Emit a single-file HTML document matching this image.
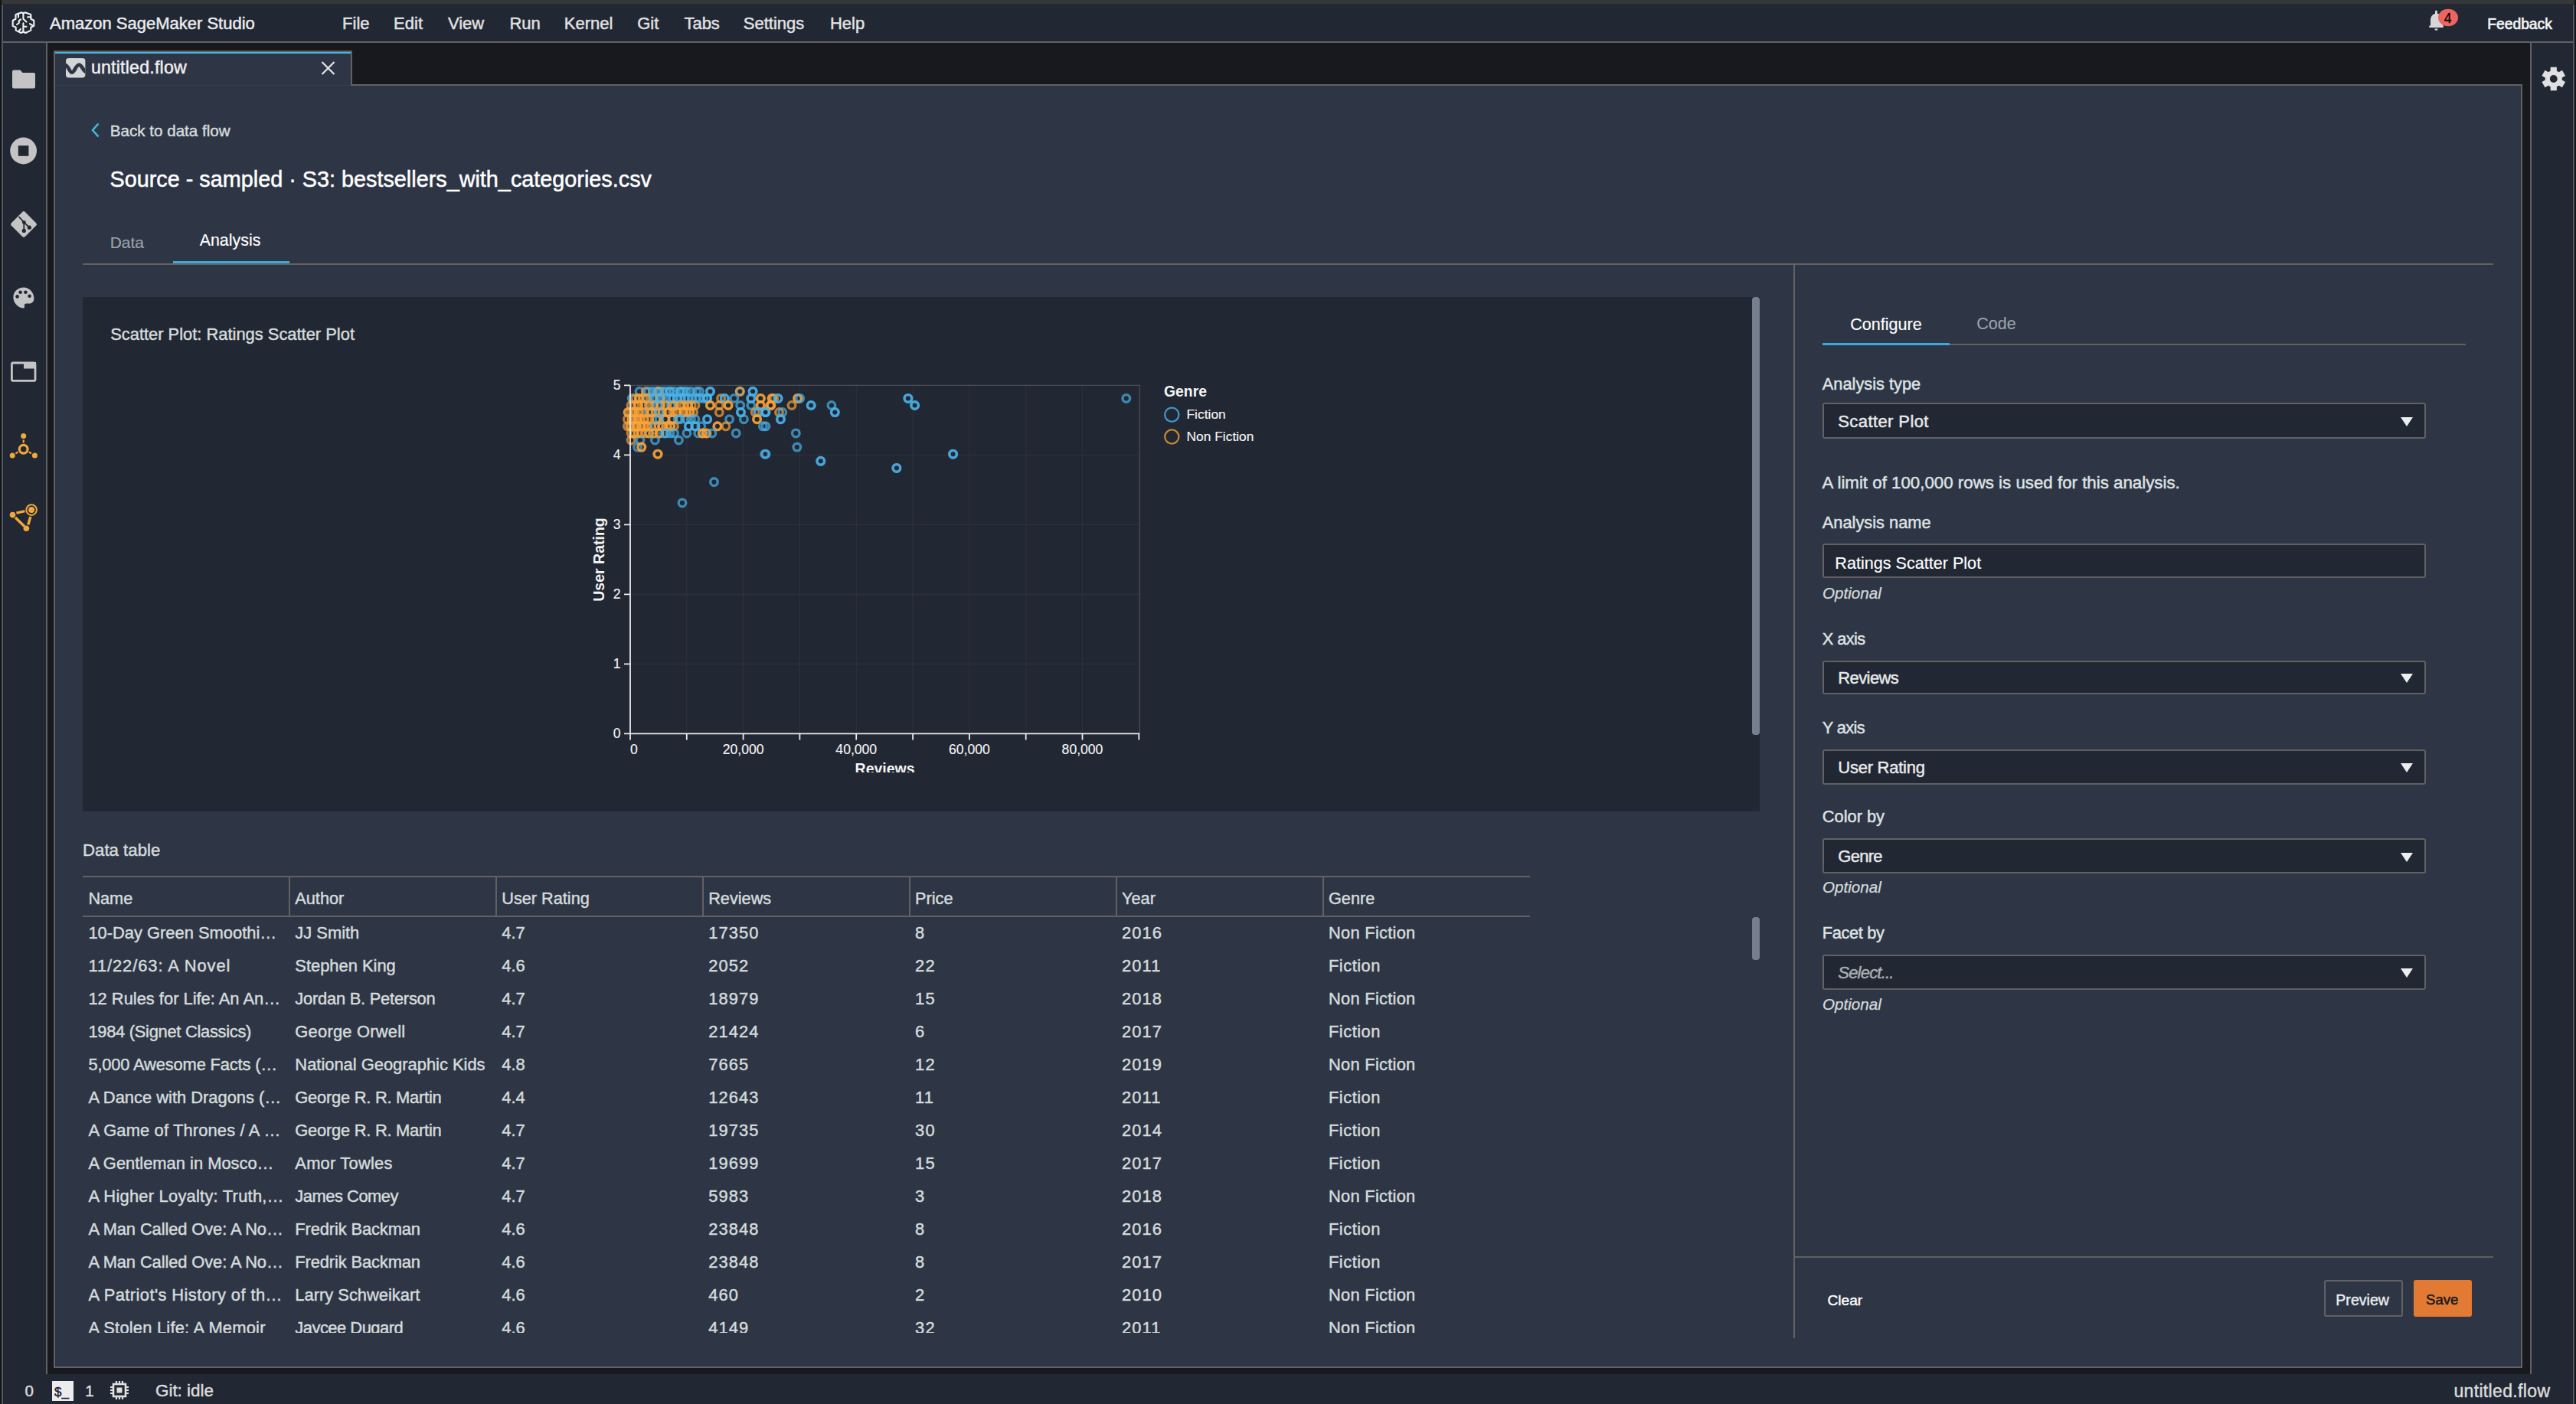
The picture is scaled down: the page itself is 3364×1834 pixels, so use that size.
<!DOCTYPE html><html><head><meta charset="utf-8"><style>
html,body{margin:0;padding:0;}
body{width:3364px;height:1834px;position:relative;overflow:hidden;background:#17191e;font-family:"Liberation Sans", sans-serif;}
div{box-sizing:border-box;}
svg{position:absolute;overflow:visible;}
</style></head><body>
<div style="position:absolute;left:0px;top:0px;width:3364px;height:5px;background:#36373b;"></div>
<div style="position:absolute;left:0px;top:5px;width:3364px;height:1px;background:#2a2a2a;"></div>
<div style="position:absolute;left:0px;top:6px;width:3364px;height:1828px;background:#212834;"></div>
<div style="position:absolute;left:0px;top:0px;width:2px;height:1834px;background:#141414;"></div>
<div style="position:absolute;left:2px;top:6px;width:2px;height:1828px;background:#4f5866;"></div>
<div style="position:absolute;left:3360px;top:6px;width:2px;height:1828px;background:#4f5866;"></div>
<div style="position:absolute;left:3362px;top:0px;width:2px;height:1834px;background:#141414;"></div>
<div style="position:absolute;left:4px;top:54px;width:3356px;height:2px;background:#616161;"></div>
<div style="position:absolute;left:62px;top:56px;width:3242px;height:1739px;background:#17191e;"></div>
<div style="position:absolute;left:60px;top:56px;width:2px;height:1739px;background:#616161;"></div>
<div style="position:absolute;left:3304px;top:56px;width:2px;height:1739px;background:#616161;"></div>
<div style="position:absolute;left:70px;top:110px;width:3224px;height:1676.5px;background:#2e3646;border:2px solid #616161;"></div>
<div style="position:absolute;left:70px;top:65.5px;width:390px;height:46.5px;background:#2e3646;border:2px solid #616161;border-bottom:none;"></div>
<div style="position:absolute;left:72px;top:67.6px;width:386px;height:2.6000000000000085px;background:#48b2e6;"></div>
<div style="position:absolute;left:72px;top:111px;width:386px;height:1px;background:#383e4b;"></div>
<svg style="left:10px;top:10px" width="40" height="40" viewBox="0 0 40 40">
<g fill="none" stroke="#f2f2f2" stroke-width="2.1" stroke-linejoin="round" stroke-linecap="round">
<path d="M20.4 7 L17.5 6.4 L10.5 9.1 L10.5 14.8 L6.7 16.8 L6.7 23.9 L10.7 25.8 L10.7 29.6 L17.5 33 L20.4 31.5 L23.4 33 L30.3 29.6 L30.3 25.8 L34.3 23.9 L34.3 16.8 L30.3 14.8 L30.3 9.1 L23.4 6.4 Z"/>
<path d="M20.4 7 L20.4 14.8 L24.5 18.5"/>
<path d="M20.4 20.4 L20.4 31.5 M20.4 24.8 L24.5 24.8"/>
<path d="M14 9.4 L14 12.5"/>
<path d="M17.1 15.4 L14.8 17.1 L14.8 20 L12 22"/>
<path d="M17.1 28 L15 30"/>
<path d="M26.2 12.3 L30.3 12.3"/>
<path d="M29 21.1 L32.2 23"/>
</g></svg>
<div style="position:absolute;left:65.00px;top:19.78px;font-size:22px;line-height:22px;color:#ececec;font-weight:normal;font-style:normal;white-space:nowrap;-webkit-text-stroke:0.45px #ececec;">Amazon SageMaker Studio</div>
<div style="position:absolute;left:447.10px;top:19.78px;font-size:22px;line-height:22px;color:#e2e2e2;font-weight:normal;font-style:normal;white-space:nowrap;-webkit-text-stroke:0.45px #e2e2e2;">File</div>
<div style="position:absolute;left:514.10px;top:19.78px;font-size:22px;line-height:22px;color:#e2e2e2;font-weight:normal;font-style:normal;white-space:nowrap;-webkit-text-stroke:0.45px #e2e2e2;">Edit</div>
<div style="position:absolute;left:584.90px;top:19.78px;font-size:22px;line-height:22px;color:#e2e2e2;font-weight:normal;font-style:normal;white-space:nowrap;-webkit-text-stroke:0.45px #e2e2e2;">View</div>
<div style="position:absolute;left:665.40px;top:19.78px;font-size:22px;line-height:22px;color:#e2e2e2;font-weight:normal;font-style:normal;white-space:nowrap;-webkit-text-stroke:0.45px #e2e2e2;">Run</div>
<div style="position:absolute;left:736.80px;top:19.78px;font-size:22px;line-height:22px;color:#e2e2e2;font-weight:normal;font-style:normal;white-space:nowrap;-webkit-text-stroke:0.45px #e2e2e2;">Kernel</div>
<div style="position:absolute;left:832.20px;top:19.78px;font-size:22px;line-height:22px;color:#e2e2e2;font-weight:normal;font-style:normal;white-space:nowrap;-webkit-text-stroke:0.45px #e2e2e2;">Git</div>
<div style="position:absolute;left:893.40px;top:19.78px;font-size:22px;line-height:22px;color:#e2e2e2;font-weight:normal;font-style:normal;white-space:nowrap;-webkit-text-stroke:0.45px #e2e2e2;">Tabs</div>
<div style="position:absolute;left:970.80px;top:19.78px;font-size:22px;line-height:22px;color:#e2e2e2;font-weight:normal;font-style:normal;white-space:nowrap;-webkit-text-stroke:0.45px #e2e2e2;">Settings</div>
<div style="position:absolute;left:1083.90px;top:19.78px;font-size:22px;line-height:22px;color:#e2e2e2;font-weight:normal;font-style:normal;white-space:nowrap;-webkit-text-stroke:0.45px #e2e2e2;">Help</div>
<svg style="left:3165px;top:8px" width="50" height="40" viewBox="0 0 50 40">
<path d="M16.5 5.5 a1.5 1.5 0 0 1 1.5 1.5 L18 9.8 C22 10.6 25.2 14 25.2 18.5 L25.2 25.5 L25.8 25.5 L25.8 28 L7.3 28 L7.3 25.5 L9 25.5 L9 18.5 C9 14 11.6 10.6 15 9.8 L15 7 a1.5 1.5 0 0 1 1.5-1.5 Z" fill="#d6d6d8"/>
<path d="M14.2 29.5 L18.8 29.5 Q18.6 31.7 16.5 31.7 Q14.4 31.7 14.2 29.5 Z" fill="#d6d6d8"/>
<ellipse cx="32" cy="15" rx="13" ry="11.3" fill="#ee6560"/>
</svg>
<div style="position:absolute;left:3196.70px;transform:translateX(-50%);top:16.39px;font-size:17.5px;line-height:17.5px;color:#000;font-weight:normal;font-style:normal;white-space:nowrap;-webkit-text-stroke:0.3px #000;">4</div>
<div style="position:absolute;left:3248.20px;top:21.76px;font-size:19.3px;line-height:19.3px;color:#f4f4f4;font-weight:normal;font-style:normal;white-space:nowrap;-webkit-text-stroke:0.65px #f4f4f4;">Feedback</div>
<svg style="left:0px;top:60px" width="62" height="660" viewBox="0 0 62 660">
<g fill="#c4c4c4">
<path d="M16 33.6 a2 2 0 0 1 2-2 L26.5 31.6 L29.5 35 L44 35 a2 2 0 0 1 2 2 L46 53.6 a2 2 0 0 1-2 2 L18 55.6 a2 2 0 0 1-2-2 Z"/>
<circle cx="30.6" cy="137" r="17.4"/>
</g>
<rect x="23.8" y="130.2" width="13.6" height="13.6" fill="#212834"/>
<g transform="translate(31 233)">
<rect x="-12.7" y="-12.7" width="25.4" height="25.4" rx="3" transform="rotate(45)" fill="#c4c4c4"/>
<path d="M-6.5 -10 L0.3 -2.6 L0.3 8.4 M0.3 -2.6 L7.3 4.2" stroke="#212834" stroke-width="1.8" fill="none"/>
<circle cx="0.3" cy="-2.6" r="2.4" fill="#212834"/><circle cx="0.3" cy="8.4" r="2.6" fill="#212834"/><circle cx="7.3" cy="4.2" r="2.6" fill="#212834"/>
</g>
<g transform="translate(0 -60)">
<path d="M31 375.6 C23 375.6 17.4 381.2 17.4 388.5 C17.4 395.5 23 401.5 30 402.6 C31.6 402.8 32.4 401.6 32 400.3 C31.4 398.6 32 396.8 34 396.6 L38 396.6 C41.6 396.6 44.4 394 44.4 390 C44.4 382.2 38.4 375.6 31 375.6 Z" fill="#c4c4c4"/>
<circle cx="22.6" cy="387.4" r="2.3" fill="#212834"/><circle cx="26.6" cy="381.8" r="2.3" fill="#212834"/><circle cx="33.4" cy="381.8" r="2.3" fill="#212834"/><circle cx="38.6" cy="386.8" r="2.3" fill="#212834"/>
<rect x="15.4" y="474" width="30.6" height="23.4" rx="2" fill="none" stroke="#c4c4c4" stroke-width="2.8"/>
<rect x="31" y="473" width="16" height="8.5" fill="#c4c4c4"/>
</g>
<g transform="translate(0 -60)" fill="#f2a83a" stroke="#f2a83a">
<circle cx="30.7" cy="586.7" r="5.4" fill="none" stroke-width="3.2"/>
<circle cx="30.7" cy="569.5" r="3.5" stroke="none"/>
<circle cx="16.2" cy="594.9" r="3.5" stroke="none"/>
<circle cx="45.4" cy="594.9" r="3.5" stroke="none"/>
<path d="M30.7 574.6 V578.6 M20.4 592.4 L23.6 590.3 M37.8 590.3 L41 592.4" stroke-width="2.2" fill="none"/>
<circle cx="16.5" cy="672.6" r="3.8" stroke="none"/>
<circle cx="34.4" cy="690.3" r="3.8" stroke="none"/>
<circle cx="41.1" cy="666.1" r="6.8" fill="none" stroke-width="2"/>
<circle cx="41.1" cy="666.1" r="4" stroke="none"/>
<path d="M21.4 670.1 L32.4 667.6 M20 676 L31.9 687.5 M39.9 675.1 L36.7 685.4" stroke-width="3.4" fill="none"/>
</g>
</svg>
<svg style="left:85.8px;top:75.8px" width="25.4" height="25.4" viewBox="0 0 25.4 25.4">
<defs><clipPath id="tc"><rect x="0" y="0" width="25.4" height="25.4" rx="3.6"/></clipPath></defs>
<rect x="0" y="0" width="25.4" height="25.4" rx="3.6" fill="#d4d5d7"/>
<path clip-path="url(#tc)" d="M-1 8.6 C3 9.6 5 18.6 8 18.6 C11 18.6 13.5 8.6 17.2 8.6 C21 8.6 22.6 17 26.4 17.8" fill="none" stroke="#2e3646" stroke-width="4.8"/>
</svg>
<div style="position:absolute;left:118.90px;top:77.16px;font-size:23.2px;line-height:23.2px;color:#f0f0f0;font-weight:normal;font-style:normal;white-space:nowrap;letter-spacing:0.2px;-webkit-text-stroke:0.45px #f0f0f0;">untitled.flow</div>
<svg style="left:419px;top:80px" width="19" height="18" viewBox="0 0 19 18">
<path d="M1.5 1 L17.5 17 M17.5 1 L1.5 17" stroke="#e6e6e6" stroke-width="2.2"/>
</svg>
<svg style="left:3310px;top:78px" width="50" height="50" viewBox="-24.75 -25 50 50"><g fill="#e0e0e0"><circle r="11"/><rect x="-4.1" y="-15.3" width="8.2" height="10" transform="rotate(0)"/><rect x="-4.1" y="-15.3" width="8.2" height="10" transform="rotate(60)"/><rect x="-4.1" y="-15.3" width="8.2" height="10" transform="rotate(120)"/><rect x="-4.1" y="-15.3" width="8.2" height="10" transform="rotate(180)"/><rect x="-4.1" y="-15.3" width="8.2" height="10" transform="rotate(240)"/><rect x="-4.1" y="-15.3" width="8.2" height="10" transform="rotate(300)"/></g><circle r="4.9" fill="#212834"/></svg>
<svg style="left:117px;top:159px" width="16" height="22" viewBox="0 0 16 22">
<path d="M11.5 2.5 L4 11 L11.5 19.5" fill="none" stroke="#44b9d6" stroke-width="2.6"/>
</svg>
<div style="position:absolute;left:143.80px;top:160.76px;font-size:20.6px;line-height:20.6px;color:#d5dbdb;font-weight:normal;font-style:normal;white-space:nowrap;-webkit-text-stroke:0.45px #d5dbdb;">Back to data flow</div>
<div style="position:absolute;left:143.50px;top:219.62px;font-size:28.8px;line-height:28.8px;color:#ffffff;font-weight:normal;font-style:normal;white-space:nowrap;-webkit-text-stroke:0.5px #fff;">Source - sampled · S3: bestsellers_with_categories.csv</div>
<div style="position:absolute;left:143.70px;top:306.12px;font-size:21px;line-height:21px;color:#9ba3ab;font-weight:normal;font-style:normal;white-space:nowrap;-webkit-text-stroke:0.15px #9ba3ab;">Data</div>
<div style="position:absolute;left:260.70px;top:303.58px;font-size:21.4px;line-height:21.4px;color:#ffffff;font-weight:normal;font-style:normal;white-space:nowrap;-webkit-text-stroke:0.15px #ffffff;">Analysis</div>
<div style="position:absolute;left:108px;top:344px;width:3148px;height:1.6000000000000227px;background:#616161;"></div>
<div style="position:absolute;left:225.8px;top:341px;width:152.2px;height:3px;background:#3fa7dc;"></div>
<div style="position:absolute;left:108px;top:388px;width:2190px;height:671.5px;background:#212733;"></div>
<div style="position:absolute;left:2288px;top:388px;width:10px;height:572px;background:#767f8e;border-radius:4px;"></div>
<div style="position:absolute;left:144.20px;top:426.46px;font-size:21.9px;line-height:21.9px;color:#d5dbdb;font-weight:normal;font-style:normal;white-space:nowrap;-webkit-text-stroke:0.45px #d5dbdb;">Scatter Plot: Ratings Scatter Plot</div>
<div style="position:absolute;left:108px;top:388px;width:2180px;height:621.4px;overflow:hidden;"><svg style="left:-108px;top:-388px" width="3364" height="1834"><path d="M896.8 503.3 V958.3 M970.6 503.3 V958.3 M1044.4 503.3 V958.3 M1118.2 503.3 V958.3 M1192.1 503.3 V958.3 M1265.9 503.3 V958.3 M1339.7 503.3 V958.3 M1413.5 503.3 V958.3 M823 867.3 H1488.3 M823 776.3 H1488.3 M823 685.3 H1488.3 M823 594.3 H1488.3" stroke="#2c313b" stroke-width="1.2" fill="none"/><path d="M823 503.4 H1488.3 V958.3" stroke="#4a4e57" stroke-width="1.3" fill="none"/><g fill="none" stroke-width="3.4" stroke-opacity="0.7"><circle cx="835.1" cy="511.3" r="4.8" stroke="#4cb2e8"/><circle cx="843.3" cy="511.3" r="4.8" stroke="#f9a338"/><circle cx="846.8" cy="511.3" r="4.8" stroke="#4cb2e8"/><circle cx="858.6" cy="511.3" r="4.8" stroke="#4cb2e8"/><circle cx="858.6" cy="511.3" r="4.8" stroke="#4cb2e8"/><circle cx="860.9" cy="511.3" r="4.8" stroke="#f9a338"/><circle cx="875.0" cy="511.3" r="4.8" stroke="#4cb2e8"/><circle cx="875.0" cy="511.3" r="4.8" stroke="#4cb2e8"/><circle cx="888.3" cy="511.3" r="4.8" stroke="#4cb2e8"/><circle cx="888.3" cy="511.3" r="4.8" stroke="#4cb2e8"/><circle cx="896.2" cy="511.3" r="4.8" stroke="#4cb2e8"/><circle cx="909.5" cy="511.3" r="4.8" stroke="#4cb2e8"/><circle cx="913.4" cy="511.3" r="4.8" stroke="#4cb2e8"/><circle cx="927.5" cy="511.3" r="4.8" stroke="#4cb2e8"/><circle cx="927.5" cy="511.3" r="4.8" stroke="#4cb2e8"/><circle cx="966.3" cy="511.3" r="4.8" stroke="#4cb2e8"/><circle cx="966.3" cy="511.3" r="4.8" stroke="#f9a338"/><circle cx="983.1" cy="511.3" r="4.8" stroke="#4cb2e8"/><circle cx="983.1" cy="511.3" r="4.8" stroke="#4cb2e8"/><circle cx="825.3" cy="520.4" r="4.8" stroke="#4cb2e8"/><circle cx="834.3" cy="520.4" r="4.8" stroke="#f9a338"/><circle cx="834.3" cy="520.4" r="4.8" stroke="#f9a338"/><circle cx="844.5" cy="520.4" r="4.8" stroke="#4cb2e8"/><circle cx="844.5" cy="520.4" r="4.8" stroke="#f9a338"/><circle cx="852.3" cy="520.4" r="4.8" stroke="#f9a338"/><circle cx="861.7" cy="520.4" r="4.8" stroke="#4cb2e8"/><circle cx="861.7" cy="520.4" r="4.8" stroke="#4cb2e8"/><circle cx="862.5" cy="520.4" r="4.8" stroke="#f9a338"/><circle cx="875.0" cy="520.4" r="4.8" stroke="#4cb2e8"/><circle cx="884.4" cy="520.4" r="4.8" stroke="#4cb2e8"/><circle cx="884.4" cy="520.4" r="4.8" stroke="#4cb2e8"/><circle cx="894.6" cy="520.4" r="4.8" stroke="#4cb2e8"/><circle cx="903.2" cy="520.4" r="4.8" stroke="#4cb2e8"/><circle cx="913.4" cy="520.4" r="4.8" stroke="#4cb2e8"/><circle cx="923.6" cy="520.4" r="4.8" stroke="#4cb2e8"/><circle cx="923.6" cy="520.4" r="4.8" stroke="#4cb2e8"/><circle cx="923.6" cy="520.4" r="4.8" stroke="#4cb2e8"/><circle cx="941.6" cy="520.4" r="4.8" stroke="#f9a338"/><circle cx="946.3" cy="520.4" r="4.8" stroke="#4cb2e8"/><circle cx="946.3" cy="520.4" r="4.8" stroke="#4cb2e8"/><circle cx="958.8" cy="520.4" r="4.8" stroke="#4cb2e8"/><circle cx="980.8" cy="520.4" r="4.8" stroke="#4cb2e8"/><circle cx="980.8" cy="520.4" r="4.8" stroke="#4cb2e8"/><circle cx="993.3" cy="520.4" r="4.8" stroke="#f9a338"/><circle cx="993.3" cy="520.4" r="4.8" stroke="#f9a338"/><circle cx="1008.2" cy="520.4" r="4.8" stroke="#f9a338"/><circle cx="1008.2" cy="520.4" r="4.8" stroke="#f9a338"/><circle cx="824.1" cy="529.5" r="4.8" stroke="#f9a338"/><circle cx="833.5" cy="529.5" r="4.8" stroke="#f9a338"/><circle cx="833.5" cy="529.5" r="4.8" stroke="#f9a338"/><circle cx="847.6" cy="529.5" r="4.8" stroke="#4cb2e8"/><circle cx="847.6" cy="529.5" r="4.8" stroke="#f9a338"/><circle cx="862.5" cy="529.5" r="4.8" stroke="#f9a338"/><circle cx="862.5" cy="529.5" r="4.8" stroke="#f9a338"/><circle cx="876.6" cy="529.5" r="4.8" stroke="#4cb2e8"/><circle cx="876.6" cy="529.5" r="4.8" stroke="#4cb2e8"/><circle cx="888.3" cy="529.5" r="4.8" stroke="#f9a338"/><circle cx="888.3" cy="529.5" r="4.8" stroke="#f9a338"/><circle cx="898.5" cy="529.5" r="4.8" stroke="#f9a338"/><circle cx="898.5" cy="529.5" r="4.8" stroke="#f9a338"/><circle cx="907.9" cy="529.5" r="4.8" stroke="#f9a338"/><circle cx="927.5" cy="529.5" r="4.8" stroke="#f9a338"/><circle cx="927.5" cy="529.5" r="4.8" stroke="#f9a338"/><circle cx="939.3" cy="529.5" r="4.8" stroke="#f9a338"/><circle cx="951.0" cy="529.5" r="4.8" stroke="#f9a338"/><circle cx="951.0" cy="529.5" r="4.8" stroke="#f9a338"/><circle cx="966.7" cy="529.5" r="4.8" stroke="#4cb2e8"/><circle cx="980.8" cy="529.5" r="4.8" stroke="#4cb2e8"/><circle cx="993.3" cy="529.5" r="4.8" stroke="#f9a338"/><circle cx="993.3" cy="529.5" r="4.8" stroke="#f9a338"/><circle cx="1005.8" cy="529.5" r="4.8" stroke="#f9a338"/><circle cx="820.2" cy="538.6" r="4.8" stroke="#f9a338"/><circle cx="820.2" cy="538.6" r="4.8" stroke="#f9a338"/><circle cx="828.0" cy="538.6" r="4.8" stroke="#f9a338"/><circle cx="828.0" cy="538.6" r="4.8" stroke="#f9a338"/><circle cx="834.3" cy="538.6" r="4.8" stroke="#f9a338"/><circle cx="834.3" cy="538.6" r="4.8" stroke="#f9a338"/><circle cx="846.8" cy="538.6" r="4.8" stroke="#4cb2e8"/><circle cx="850.7" cy="538.6" r="4.8" stroke="#f9a338"/><circle cx="850.7" cy="538.6" r="4.8" stroke="#f9a338"/><circle cx="860.9" cy="538.6" r="4.8" stroke="#4cb2e8"/><circle cx="860.9" cy="538.6" r="4.8" stroke="#4cb2e8"/><circle cx="872.7" cy="538.6" r="4.8" stroke="#f9a338"/><circle cx="872.7" cy="538.6" r="4.8" stroke="#f9a338"/><circle cx="884.4" cy="538.6" r="4.8" stroke="#f9a338"/><circle cx="884.4" cy="538.6" r="4.8" stroke="#f9a338"/><circle cx="892.3" cy="538.6" r="4.8" stroke="#f9a338"/><circle cx="892.3" cy="538.6" r="4.8" stroke="#f9a338"/><circle cx="900.9" cy="538.6" r="4.8" stroke="#f9a338"/><circle cx="900.9" cy="538.6" r="4.8" stroke="#f9a338"/><circle cx="905.6" cy="538.6" r="4.8" stroke="#f9a338"/><circle cx="939.3" cy="538.6" r="4.8" stroke="#f9a338"/><circle cx="967.5" cy="538.6" r="4.8" stroke="#4cb2e8"/><circle cx="967.5" cy="538.6" r="4.8" stroke="#4cb2e8"/><circle cx="986.3" cy="538.6" r="4.8" stroke="#f9a338"/><circle cx="990.2" cy="538.6" r="4.8" stroke="#4cb2e8"/><circle cx="990.2" cy="538.6" r="4.8" stroke="#4cb2e8"/><circle cx="999.6" cy="538.6" r="4.8" stroke="#4cb2e8"/><circle cx="999.6" cy="538.6" r="4.8" stroke="#4cb2e8"/><circle cx="824.9" cy="547.7" r="4.8" stroke="#f9a338"/><circle cx="824.9" cy="547.7" r="4.8" stroke="#f9a338"/><circle cx="832.7" cy="547.7" r="4.8" stroke="#f9a338"/><circle cx="832.7" cy="547.7" r="4.8" stroke="#f9a338"/><circle cx="841.3" cy="547.7" r="4.8" stroke="#f9a338"/><circle cx="841.3" cy="547.7" r="4.8" stroke="#f9a338"/><circle cx="857.0" cy="547.7" r="4.8" stroke="#4cb2e8"/><circle cx="857.0" cy="547.7" r="4.8" stroke="#f9a338"/><circle cx="868.8" cy="547.7" r="4.8" stroke="#f9a338"/><circle cx="868.8" cy="547.7" r="4.8" stroke="#f9a338"/><circle cx="878.2" cy="547.7" r="4.8" stroke="#4cb2e8"/><circle cx="878.2" cy="547.7" r="4.8" stroke="#f9a338"/><circle cx="885.2" cy="547.7" r="4.8" stroke="#4cb2e8"/><circle cx="896.2" cy="547.7" r="4.8" stroke="#4cb2e8"/><circle cx="902.4" cy="547.7" r="4.8" stroke="#4cb2e8"/><circle cx="923.6" cy="547.7" r="4.8" stroke="#4cb2e8"/><circle cx="923.6" cy="547.7" r="4.8" stroke="#4cb2e8"/><circle cx="952.6" cy="547.7" r="4.8" stroke="#4cb2e8"/><circle cx="971.4" cy="547.7" r="4.8" stroke="#4cb2e8"/><circle cx="988.6" cy="547.7" r="4.8" stroke="#f9a338"/><circle cx="988.6" cy="547.7" r="4.8" stroke="#f9a338"/><circle cx="823.3" cy="556.8" r="4.8" stroke="#f9a338"/><circle cx="823.3" cy="556.8" r="4.8" stroke="#f9a338"/><circle cx="831.2" cy="556.8" r="4.8" stroke="#f9a338"/><circle cx="831.2" cy="556.8" r="4.8" stroke="#f9a338"/><circle cx="837.4" cy="556.8" r="4.8" stroke="#f9a338"/><circle cx="837.4" cy="556.8" r="4.8" stroke="#f9a338"/><circle cx="845.3" cy="556.8" r="4.8" stroke="#f9a338"/><circle cx="845.3" cy="556.8" r="4.8" stroke="#f9a338"/><circle cx="855.4" cy="556.8" r="4.8" stroke="#4cb2e8"/><circle cx="864.8" cy="556.8" r="4.8" stroke="#f9a338"/><circle cx="864.8" cy="556.8" r="4.8" stroke="#f9a338"/><circle cx="875.8" cy="556.8" r="4.8" stroke="#f9a338"/><circle cx="875.8" cy="556.8" r="4.8" stroke="#f9a338"/><circle cx="899.3" cy="556.8" r="4.8" stroke="#4cb2e8"/><circle cx="899.3" cy="556.8" r="4.8" stroke="#4cb2e8"/><circle cx="907.9" cy="556.8" r="4.8" stroke="#4cb2e8"/><circle cx="907.9" cy="556.8" r="4.8" stroke="#4cb2e8"/><circle cx="915.8" cy="556.8" r="4.8" stroke="#4cb2e8"/><circle cx="936.9" cy="556.8" r="4.8" stroke="#f9a338"/><circle cx="936.9" cy="556.8" r="4.8" stroke="#f9a338"/><circle cx="947.9" cy="556.8" r="4.8" stroke="#f9a338"/><circle cx="996.4" cy="556.8" r="4.8" stroke="#4cb2e8"/><circle cx="828.0" cy="565.9" r="4.8" stroke="#f9a338"/><circle cx="828.0" cy="565.9" r="4.8" stroke="#f9a338"/><circle cx="837.4" cy="565.9" r="4.8" stroke="#f9a338"/><circle cx="847.6" cy="565.9" r="4.8" stroke="#4cb2e8"/><circle cx="847.6" cy="565.9" r="4.8" stroke="#f9a338"/><circle cx="860.9" cy="565.9" r="4.8" stroke="#f9a338"/><circle cx="860.9" cy="565.9" r="4.8" stroke="#f9a338"/><circle cx="867.2" cy="565.9" r="4.8" stroke="#4cb2e8"/><circle cx="875.0" cy="565.9" r="4.8" stroke="#4cb2e8"/><circle cx="897.0" cy="565.9" r="4.8" stroke="#4cb2e8"/><circle cx="911.8" cy="565.9" r="4.8" stroke="#4cb2e8"/><circle cx="917.3" cy="565.9" r="4.8" stroke="#f9a338"/><circle cx="917.3" cy="565.9" r="4.8" stroke="#f9a338"/><circle cx="922.8" cy="565.9" r="4.8" stroke="#f9a338"/><circle cx="922.8" cy="565.9" r="4.8" stroke="#f9a338"/><circle cx="929.9" cy="565.9" r="4.8" stroke="#4cb2e8"/><circle cx="961.2" cy="565.9" r="4.8" stroke="#4cb2e8"/><circle cx="824.1" cy="575.0" r="4.8" stroke="#f9a338"/><circle cx="835.9" cy="575.0" r="4.8" stroke="#4cb2e8"/><circle cx="855.4" cy="575.0" r="4.8" stroke="#4cb2e8"/><circle cx="886.4" cy="575.0" r="4.8" stroke="#4cb2e8"/><circle cx="832.7" cy="584.1" r="4.8" stroke="#4cb2e8"/><circle cx="837.8" cy="584.1" r="4.8" stroke="#f9a338"/><circle cx="837.8" cy="584.1" r="4.8" stroke="#f9a338"/><circle cx="859.0" cy="593.2" r="4.8" stroke="#f9a338"/><circle cx="859.0" cy="593.2" r="4.8" stroke="#f9a338"/><circle cx="998.8" cy="593.2" r="4.8" stroke="#4cb2e8"/><circle cx="1010.7" cy="520.4" r="4.8" stroke="#f9a338"/><circle cx="1016.0" cy="520.4" r="4.8" stroke="#4cb2e8"/><circle cx="1016.0" cy="520.4" r="4.8" stroke="#4cb2e8"/><circle cx="1006.8" cy="529.5" r="4.8" stroke="#f9a338"/><circle cx="1006.8" cy="529.5" r="4.8" stroke="#f9a338"/><circle cx="1041.7" cy="520.4" r="4.8" stroke="#f9a338"/><circle cx="1041.7" cy="520.4" r="4.8" stroke="#f9a338"/><circle cx="1044.6" cy="520.4" r="4.8" stroke="#4cb2e8"/><circle cx="1034.0" cy="529.5" r="4.8" stroke="#f9a338"/><circle cx="1059.2" cy="529.5" r="4.8" stroke="#4cb2e8"/><circle cx="1059.2" cy="529.5" r="4.8" stroke="#4cb2e8"/><circle cx="1085.9" cy="529.5" r="4.8" stroke="#4cb2e8"/><circle cx="1090.3" cy="538.6" r="4.8" stroke="#4cb2e8"/><circle cx="1090.3" cy="538.6" r="4.8" stroke="#4cb2e8"/><circle cx="1017.5" cy="538.6" r="4.8" stroke="#f9a338"/><circle cx="1021.8" cy="538.6" r="4.8" stroke="#4cb2e8"/><circle cx="1000.0" cy="538.6" r="4.8" stroke="#4cb2e8"/><circle cx="1019.4" cy="547.7" r="4.8" stroke="#4cb2e8"/><circle cx="1019.4" cy="547.7" r="4.8" stroke="#4cb2e8"/><circle cx="1000.0" cy="556.8" r="4.8" stroke="#4cb2e8"/><circle cx="1039.3" cy="565.9" r="4.8" stroke="#4cb2e8"/><circle cx="1040.8" cy="584.1" r="4.8" stroke="#4cb2e8"/><circle cx="1000.0" cy="593.2" r="4.8" stroke="#4cb2e8"/><circle cx="1071.8" cy="602.3" r="4.8" stroke="#4cb2e8"/><circle cx="1071.8" cy="602.3" r="4.8" stroke="#4cb2e8"/><circle cx="1185.9" cy="520.4" r="4.8" stroke="#4cb2e8"/><circle cx="1185.9" cy="520.4" r="4.8" stroke="#4cb2e8"/><circle cx="1194.6" cy="529.5" r="4.8" stroke="#4cb2e8"/><circle cx="1194.6" cy="529.5" r="4.8" stroke="#4cb2e8"/><circle cx="1244.6" cy="593.2" r="4.8" stroke="#4cb2e8"/><circle cx="1244.6" cy="593.2" r="4.8" stroke="#4cb2e8"/><circle cx="852.3" cy="511.3" r="4.8" stroke="#4cb2e8"/><circle cx="864.8" cy="511.3" r="4.8" stroke="#4cb2e8"/><circle cx="869.5" cy="511.3" r="4.8" stroke="#4cb2e8"/><circle cx="880.5" cy="511.3" r="4.8" stroke="#4cb2e8"/><circle cx="892.3" cy="511.3" r="4.8" stroke="#4cb2e8"/><circle cx="901.7" cy="511.3" r="4.8" stroke="#4cb2e8"/><circle cx="853.9" cy="520.4" r="4.8" stroke="#4cb2e8"/><circle cx="869.5" cy="520.4" r="4.8" stroke="#4cb2e8"/><circle cx="878.9" cy="520.4" r="4.8" stroke="#4cb2e8"/><circle cx="889.1" cy="520.4" r="4.8" stroke="#4cb2e8"/><circle cx="898.5" cy="520.4" r="4.8" stroke="#4cb2e8"/><circle cx="908.7" cy="520.4" r="4.8" stroke="#4cb2e8"/><circle cx="918.9" cy="520.4" r="4.8" stroke="#4cb2e8"/><circle cx="829.6" cy="520.4" r="4.8" stroke="#f9a338"/><circle cx="839.8" cy="520.4" r="4.8" stroke="#f9a338"/><circle cx="857.0" cy="520.4" r="4.8" stroke="#4cb2e8"/><circle cx="828.8" cy="529.5" r="4.8" stroke="#f9a338"/><circle cx="841.3" cy="529.5" r="4.8" stroke="#f9a338"/><circle cx="853.9" cy="529.5" r="4.8" stroke="#f9a338"/><circle cx="869.5" cy="529.5" r="4.8" stroke="#f9a338"/><circle cx="880.5" cy="529.5" r="4.8" stroke="#f9a338"/><circle cx="893.0" cy="529.5" r="4.8" stroke="#f9a338"/><circle cx="903.2" cy="529.5" r="4.8" stroke="#f9a338"/><circle cx="858.6" cy="529.5" r="4.8" stroke="#4cb2e8"/><circle cx="824.1" cy="538.6" r="4.8" stroke="#f9a338"/><circle cx="839.8" cy="538.6" r="4.8" stroke="#f9a338"/><circle cx="856.2" cy="538.6" r="4.8" stroke="#f9a338"/><circle cx="864.8" cy="538.6" r="4.8" stroke="#f9a338"/><circle cx="878.9" cy="538.6" r="4.8" stroke="#f9a338"/><circle cx="897.0" cy="538.6" r="4.8" stroke="#f9a338"/><circle cx="819.4" cy="547.7" r="4.8" stroke="#f9a338"/><circle cx="828.8" cy="547.7" r="4.8" stroke="#f9a338"/><circle cx="836.6" cy="547.7" r="4.8" stroke="#f9a338"/><circle cx="846.0" cy="547.7" r="4.8" stroke="#f9a338"/><circle cx="860.9" cy="547.7" r="4.8" stroke="#4cb2e8"/><circle cx="888.3" cy="547.7" r="4.8" stroke="#4cb2e8"/><circle cx="907.9" cy="547.7" r="4.8" stroke="#4cb2e8"/><circle cx="819.4" cy="556.8" r="4.8" stroke="#f9a338"/><circle cx="827.2" cy="556.8" r="4.8" stroke="#f9a338"/><circle cx="841.3" cy="556.8" r="4.8" stroke="#f9a338"/><circle cx="850.7" cy="556.8" r="4.8" stroke="#f9a338"/><circle cx="860.1" cy="556.8" r="4.8" stroke="#f9a338"/><circle cx="871.1" cy="556.8" r="4.8" stroke="#f9a338"/><circle cx="880.5" cy="556.8" r="4.8" stroke="#f9a338"/><circle cx="824.1" cy="565.9" r="4.8" stroke="#f9a338"/><circle cx="832.7" cy="565.9" r="4.8" stroke="#f9a338"/><circle cx="842.9" cy="565.9" r="4.8" stroke="#f9a338"/><circle cx="853.9" cy="565.9" r="4.8" stroke="#f9a338"/><circle cx="869.5" cy="565.9" r="4.8" stroke="#4cb2e8"/><circle cx="880.5" cy="565.9" r="4.8" stroke="#4cb2e8"/><circle cx="1170.9" cy="611.4" r="4.8" stroke="#4cb2e8"/><circle cx="1170.9" cy="611.4" r="4.8" stroke="#4cb2e8"/><circle cx="932.5" cy="629.6" r="4.8" stroke="#4cb2e8"/><circle cx="891.0" cy="656.9" r="4.8" stroke="#4cb2e8"/><circle cx="1470.8" cy="520.4" r="4.8" stroke="#4cb2e8"/></g><path d="M823 503.3 V958.3 H1488.3 M815 958.3 H823 M815 867.3 H823 M815 776.3 H823 M815 685.3 H823 M815 594.3 H823 M815 503.3 H823 M823.0 958.3 V966.5 M896.8 958.3 V966.5 M970.6 958.3 V966.5 M1044.4 958.3 V966.5 M1118.2 958.3 V966.5 M1192.1 958.3 V966.5 M1265.9 958.3 V966.5 M1339.7 958.3 V966.5 M1413.5 958.3 V966.5 M1487.3 958.3 V966.5" stroke="#ececec" stroke-width="1.8" fill="none"/></svg></div>
<div style="position:absolute;right:2553.50px;top:949.60px;font-size:17.6px;line-height:17.6px;color:#f4f4f4;font-weight:normal;font-style:normal;white-space:nowrap;-webkit-text-stroke:0.15px #f4f4f4;">0</div>
<div style="position:absolute;right:2553.50px;top:858.60px;font-size:17.6px;line-height:17.6px;color:#f4f4f4;font-weight:normal;font-style:normal;white-space:nowrap;-webkit-text-stroke:0.15px #f4f4f4;">1</div>
<div style="position:absolute;right:2553.50px;top:767.60px;font-size:17.6px;line-height:17.6px;color:#f4f4f4;font-weight:normal;font-style:normal;white-space:nowrap;-webkit-text-stroke:0.15px #f4f4f4;">2</div>
<div style="position:absolute;right:2553.50px;top:676.60px;font-size:17.6px;line-height:17.6px;color:#f4f4f4;font-weight:normal;font-style:normal;white-space:nowrap;-webkit-text-stroke:0.15px #f4f4f4;">3</div>
<div style="position:absolute;right:2553.50px;top:585.60px;font-size:17.6px;line-height:17.6px;color:#f4f4f4;font-weight:normal;font-style:normal;white-space:nowrap;-webkit-text-stroke:0.15px #f4f4f4;">4</div>
<div style="position:absolute;right:2553.50px;top:494.60px;font-size:17.6px;line-height:17.6px;color:#f4f4f4;font-weight:normal;font-style:normal;white-space:nowrap;-webkit-text-stroke:0.15px #f4f4f4;">5</div>
<div style="position:absolute;left:823.00px;top:971.40px;font-size:17.6px;line-height:17.6px;color:#f4f4f4;font-weight:normal;font-style:normal;white-space:nowrap;-webkit-text-stroke:0.15px #f4f4f4;">0</div>
<div style="position:absolute;left:970.62px;transform:translateX(-50%);top:971.40px;font-size:17.6px;line-height:17.6px;color:#f4f4f4;font-weight:normal;font-style:normal;white-space:nowrap;-webkit-text-stroke:0.15px #f4f4f4;">20,000</div>
<div style="position:absolute;left:1118.25px;transform:translateX(-50%);top:971.40px;font-size:17.6px;line-height:17.6px;color:#f4f4f4;font-weight:normal;font-style:normal;white-space:nowrap;-webkit-text-stroke:0.15px #f4f4f4;">40,000</div>
<div style="position:absolute;left:1265.88px;transform:translateX(-50%);top:971.40px;font-size:17.6px;line-height:17.6px;color:#f4f4f4;font-weight:normal;font-style:normal;white-space:nowrap;-webkit-text-stroke:0.15px #f4f4f4;">60,000</div>
<div style="position:absolute;left:1413.50px;transform:translateX(-50%);top:971.40px;font-size:17.6px;line-height:17.6px;color:#f4f4f4;font-weight:normal;font-style:normal;white-space:nowrap;-webkit-text-stroke:0.15px #f4f4f4;">80,000</div>
<div style="position:absolute;left:108px;top:388px;width:2180px;height:621.4px;overflow:hidden;">
<div style="position:absolute;left:1047.6px;top:607.29px;transform:translateX(-50%);font-size:19.5px;line-height:19.5px;font-weight:bold;color:#f4f4f4;white-space:nowrap;">Reviews</div>
</div>
<div style="position:absolute;left:788.7px;top:730.7px;width:0;height:0;"><div style="position:absolute;left:0;top:0;transform:rotate(-90deg);transform-origin:0 0;"><div style="position:absolute;left:0;top:-16.51px;transform:translateX(-50%);font-size:19.5px;line-height:19.5px;font-weight:bold;color:#f4f4f4;white-space:nowrap;">User Rating</div></div></div>
<div style="position:absolute;left:1520.00px;top:501.88px;font-size:19.4px;line-height:19.4px;color:#f4f4f4;font-weight:bold;font-style:normal;white-space:nowrap;">Genre</div>
<svg style="left:1500px;top:520px" width="60" height="70"><circle cx="30.3" cy="21.7" r="9.1" fill="none" stroke="#49bcf5" stroke-opacity="0.75" stroke-width="2.3"/><circle cx="30.3" cy="50.5" r="9.1" fill="none" stroke="#ffa733" stroke-opacity="0.75" stroke-width="2.3"/></svg>
<div style="position:absolute;left:1549.50px;top:532.77px;font-size:17.4px;line-height:17.4px;color:#f4f4f4;font-weight:normal;font-style:normal;white-space:nowrap;-webkit-text-stroke:0.15px #f4f4f4;">Fiction</div>
<div style="position:absolute;left:1549.50px;top:561.77px;font-size:17.4px;line-height:17.4px;color:#f4f4f4;font-weight:normal;font-style:normal;white-space:nowrap;-webkit-text-stroke:0.15px #f4f4f4;">Non Fiction</div>
<div style="position:absolute;left:108.10px;top:1099.81px;font-size:22.2px;line-height:22.2px;color:#d5dbdb;font-weight:normal;font-style:normal;white-space:nowrap;-webkit-text-stroke:0.45px #d5dbdb;">Data table</div>
<div style="position:absolute;left:108px;top:1144px;width:1889.5px;height:2px;background:#616161;"></div>
<div style="position:absolute;left:108px;top:1196px;width:1889.5px;height:2px;background:#616161;"></div>
<div style="position:absolute;left:377.43px;top:1146px;width:2.0px;height:50px;background:#616161;"></div>
<div style="position:absolute;left:647.36px;top:1146px;width:2.0px;height:50px;background:#616161;"></div>
<div style="position:absolute;left:917.29px;top:1146px;width:2.0px;height:50px;background:#616161;"></div>
<div style="position:absolute;left:1187.22px;top:1146px;width:2.0px;height:50px;background:#616161;"></div>
<div style="position:absolute;left:1457.15px;top:1146px;width:2.0px;height:50px;background:#616161;"></div>
<div style="position:absolute;left:1727.08px;top:1146px;width:2.0px;height:50px;background:#616161;"></div>
<div style="position:absolute;left:115.40px;top:1163.03px;font-size:21.7px;line-height:21.7px;color:#d5dbdb;font-weight:normal;font-style:normal;white-space:nowrap;-webkit-text-stroke:0.45px #d5dbdb;">Name</div>
<div style="position:absolute;left:385.33px;top:1163.03px;font-size:21.7px;line-height:21.7px;color:#d5dbdb;font-weight:normal;font-style:normal;white-space:nowrap;-webkit-text-stroke:0.45px #d5dbdb;">Author</div>
<div style="position:absolute;left:655.26px;top:1163.03px;font-size:21.7px;line-height:21.7px;color:#d5dbdb;font-weight:normal;font-style:normal;white-space:nowrap;-webkit-text-stroke:0.45px #d5dbdb;">User Rating</div>
<div style="position:absolute;left:925.19px;top:1163.03px;font-size:21.7px;line-height:21.7px;color:#d5dbdb;font-weight:normal;font-style:normal;white-space:nowrap;-webkit-text-stroke:0.45px #d5dbdb;">Reviews</div>
<div style="position:absolute;left:1195.12px;top:1163.03px;font-size:21.7px;line-height:21.7px;color:#d5dbdb;font-weight:normal;font-style:normal;white-space:nowrap;-webkit-text-stroke:0.45px #d5dbdb;">Price</div>
<div style="position:absolute;left:1465.05px;top:1163.03px;font-size:21.7px;line-height:21.7px;color:#d5dbdb;font-weight:normal;font-style:normal;white-space:nowrap;-webkit-text-stroke:0.45px #d5dbdb;">Year</div>
<div style="position:absolute;left:1734.98px;top:1163.03px;font-size:21.7px;line-height:21.7px;color:#d5dbdb;font-weight:normal;font-style:normal;white-space:nowrap;-webkit-text-stroke:0.45px #d5dbdb;">Genre</div>
<div style="position:absolute;left:0;top:0;width:3364px;height:1740.6px;overflow:hidden;">
<div style="position:absolute;left:115.40px;top:1208.06px;font-size:21.9px;line-height:21.9px;color:#d5dbdb;font-weight:normal;font-style:normal;white-space:nowrap;-webkit-text-stroke:0.45px #d5dbdb;">10-Day Green Smoothi…</div>
<div style="position:absolute;left:385.33px;top:1208.06px;font-size:21.9px;line-height:21.9px;color:#d5dbdb;font-weight:normal;font-style:normal;white-space:nowrap;-webkit-text-stroke:0.45px #d5dbdb;">JJ Smith</div>
<div style="position:absolute;left:655.26px;top:1208.06px;font-size:21.9px;line-height:21.9px;color:#d5dbdb;font-weight:normal;font-style:normal;white-space:nowrap;-webkit-text-stroke:0.45px #d5dbdb;">4.7</div>
<div style="position:absolute;left:925.19px;top:1208.06px;font-size:21.9px;line-height:21.9px;color:#d5dbdb;font-weight:normal;font-style:normal;white-space:nowrap;letter-spacing:1.100px;-webkit-text-stroke:0.45px #d5dbdb;">17350</div>
<div style="position:absolute;left:1195.12px;top:1208.06px;font-size:21.9px;line-height:21.9px;color:#d5dbdb;font-weight:normal;font-style:normal;white-space:nowrap;-webkit-text-stroke:0.45px #d5dbdb;">8</div>
<div style="position:absolute;left:1465.05px;top:1208.06px;font-size:21.9px;line-height:21.9px;color:#d5dbdb;font-weight:normal;font-style:normal;white-space:nowrap;letter-spacing:1.100px;-webkit-text-stroke:0.45px #d5dbdb;">2016</div>
<div style="position:absolute;left:1734.98px;top:1208.06px;font-size:21.9px;line-height:21.9px;color:#d5dbdb;font-weight:normal;font-style:normal;white-space:nowrap;letter-spacing:0.260px;-webkit-text-stroke:0.45px #d5dbdb;">Non Fiction</div>
<div style="position:absolute;left:115.40px;top:1251.06px;font-size:21.9px;line-height:21.9px;color:#d5dbdb;font-weight:normal;font-style:normal;white-space:nowrap;letter-spacing:0.938px;-webkit-text-stroke:0.45px #d5dbdb;">11/22/63: A Novel</div>
<div style="position:absolute;left:385.33px;top:1251.06px;font-size:21.9px;line-height:21.9px;color:#d5dbdb;font-weight:normal;font-style:normal;white-space:nowrap;-webkit-text-stroke:0.45px #d5dbdb;">Stephen King</div>
<div style="position:absolute;left:655.26px;top:1251.06px;font-size:21.9px;line-height:21.9px;color:#d5dbdb;font-weight:normal;font-style:normal;white-space:nowrap;-webkit-text-stroke:0.45px #d5dbdb;">4.6</div>
<div style="position:absolute;left:925.19px;top:1251.06px;font-size:21.9px;line-height:21.9px;color:#d5dbdb;font-weight:normal;font-style:normal;white-space:nowrap;letter-spacing:1.100px;-webkit-text-stroke:0.45px #d5dbdb;">2052</div>
<div style="position:absolute;left:1195.12px;top:1251.06px;font-size:21.9px;line-height:21.9px;color:#d5dbdb;font-weight:normal;font-style:normal;white-space:nowrap;letter-spacing:1.100px;-webkit-text-stroke:0.45px #d5dbdb;">22</div>
<div style="position:absolute;left:1465.05px;top:1251.06px;font-size:21.9px;line-height:21.9px;color:#d5dbdb;font-weight:normal;font-style:normal;white-space:nowrap;letter-spacing:1.100px;-webkit-text-stroke:0.45px #d5dbdb;">2011</div>
<div style="position:absolute;left:1734.98px;top:1251.06px;font-size:21.9px;line-height:21.9px;color:#d5dbdb;font-weight:normal;font-style:normal;white-space:nowrap;letter-spacing:0.500px;-webkit-text-stroke:0.45px #d5dbdb;">Fiction</div>
<div style="position:absolute;left:115.40px;top:1294.06px;font-size:21.9px;line-height:21.9px;color:#d5dbdb;font-weight:normal;font-style:normal;white-space:nowrap;-webkit-text-stroke:0.45px #d5dbdb;">12 Rules for Life: An An…</div>
<div style="position:absolute;left:385.33px;top:1294.06px;font-size:21.9px;line-height:21.9px;color:#d5dbdb;font-weight:normal;font-style:normal;white-space:nowrap;letter-spacing:-0.235px;-webkit-text-stroke:0.45px #d5dbdb;">Jordan B. Peterson</div>
<div style="position:absolute;left:655.26px;top:1294.06px;font-size:21.9px;line-height:21.9px;color:#d5dbdb;font-weight:normal;font-style:normal;white-space:nowrap;-webkit-text-stroke:0.45px #d5dbdb;">4.7</div>
<div style="position:absolute;left:925.19px;top:1294.06px;font-size:21.9px;line-height:21.9px;color:#d5dbdb;font-weight:normal;font-style:normal;white-space:nowrap;letter-spacing:1.100px;-webkit-text-stroke:0.45px #d5dbdb;">18979</div>
<div style="position:absolute;left:1195.12px;top:1294.06px;font-size:21.9px;line-height:21.9px;color:#d5dbdb;font-weight:normal;font-style:normal;white-space:nowrap;letter-spacing:1.100px;-webkit-text-stroke:0.45px #d5dbdb;">15</div>
<div style="position:absolute;left:1465.05px;top:1294.06px;font-size:21.9px;line-height:21.9px;color:#d5dbdb;font-weight:normal;font-style:normal;white-space:nowrap;letter-spacing:1.100px;-webkit-text-stroke:0.45px #d5dbdb;">2018</div>
<div style="position:absolute;left:1734.98px;top:1294.06px;font-size:21.9px;line-height:21.9px;color:#d5dbdb;font-weight:normal;font-style:normal;white-space:nowrap;letter-spacing:0.260px;-webkit-text-stroke:0.45px #d5dbdb;">Non Fiction</div>
<div style="position:absolute;left:115.40px;top:1337.06px;font-size:21.9px;line-height:21.9px;color:#d5dbdb;font-weight:normal;font-style:normal;white-space:nowrap;letter-spacing:-0.286px;-webkit-text-stroke:0.45px #d5dbdb;">1984 (Signet Classics)</div>
<div style="position:absolute;left:385.33px;top:1337.06px;font-size:21.9px;line-height:21.9px;color:#d5dbdb;font-weight:normal;font-style:normal;white-space:nowrap;letter-spacing:0.225px;-webkit-text-stroke:0.45px #d5dbdb;">George Orwell</div>
<div style="position:absolute;left:655.26px;top:1337.06px;font-size:21.9px;line-height:21.9px;color:#d5dbdb;font-weight:normal;font-style:normal;white-space:nowrap;-webkit-text-stroke:0.45px #d5dbdb;">4.7</div>
<div style="position:absolute;left:925.19px;top:1337.06px;font-size:21.9px;line-height:21.9px;color:#d5dbdb;font-weight:normal;font-style:normal;white-space:nowrap;letter-spacing:1.100px;-webkit-text-stroke:0.45px #d5dbdb;">21424</div>
<div style="position:absolute;left:1195.12px;top:1337.06px;font-size:21.9px;line-height:21.9px;color:#d5dbdb;font-weight:normal;font-style:normal;white-space:nowrap;-webkit-text-stroke:0.45px #d5dbdb;">6</div>
<div style="position:absolute;left:1465.05px;top:1337.06px;font-size:21.9px;line-height:21.9px;color:#d5dbdb;font-weight:normal;font-style:normal;white-space:nowrap;letter-spacing:1.100px;-webkit-text-stroke:0.45px #d5dbdb;">2017</div>
<div style="position:absolute;left:1734.98px;top:1337.06px;font-size:21.9px;line-height:21.9px;color:#d5dbdb;font-weight:normal;font-style:normal;white-space:nowrap;letter-spacing:0.500px;-webkit-text-stroke:0.45px #d5dbdb;">Fiction</div>
<div style="position:absolute;left:115.40px;top:1380.06px;font-size:21.9px;line-height:21.9px;color:#d5dbdb;font-weight:normal;font-style:normal;white-space:nowrap;letter-spacing:-0.162px;-webkit-text-stroke:0.45px #d5dbdb;">5,000 Awesome Facts (…</div>
<div style="position:absolute;left:385.33px;top:1380.06px;font-size:21.9px;line-height:21.9px;color:#d5dbdb;font-weight:normal;font-style:normal;white-space:nowrap;-webkit-text-stroke:0.45px #d5dbdb;">National Geographic Kids</div>
<div style="position:absolute;left:655.26px;top:1380.06px;font-size:21.9px;line-height:21.9px;color:#d5dbdb;font-weight:normal;font-style:normal;white-space:nowrap;-webkit-text-stroke:0.45px #d5dbdb;">4.8</div>
<div style="position:absolute;left:925.19px;top:1380.06px;font-size:21.9px;line-height:21.9px;color:#d5dbdb;font-weight:normal;font-style:normal;white-space:nowrap;letter-spacing:1.100px;-webkit-text-stroke:0.45px #d5dbdb;">7665</div>
<div style="position:absolute;left:1195.12px;top:1380.06px;font-size:21.9px;line-height:21.9px;color:#d5dbdb;font-weight:normal;font-style:normal;white-space:nowrap;letter-spacing:1.100px;-webkit-text-stroke:0.45px #d5dbdb;">12</div>
<div style="position:absolute;left:1465.05px;top:1380.06px;font-size:21.9px;line-height:21.9px;color:#d5dbdb;font-weight:normal;font-style:normal;white-space:nowrap;letter-spacing:1.100px;-webkit-text-stroke:0.45px #d5dbdb;">2019</div>
<div style="position:absolute;left:1734.98px;top:1380.06px;font-size:21.9px;line-height:21.9px;color:#d5dbdb;font-weight:normal;font-style:normal;white-space:nowrap;letter-spacing:0.260px;-webkit-text-stroke:0.45px #d5dbdb;">Non Fiction</div>
<div style="position:absolute;left:115.40px;top:1423.06px;font-size:21.9px;line-height:21.9px;color:#d5dbdb;font-weight:normal;font-style:normal;white-space:nowrap;-webkit-text-stroke:0.45px #d5dbdb;">A Dance with Dragons (…</div>
<div style="position:absolute;left:385.33px;top:1423.06px;font-size:21.9px;line-height:21.9px;color:#d5dbdb;font-weight:normal;font-style:normal;white-space:nowrap;letter-spacing:-0.250px;-webkit-text-stroke:0.45px #d5dbdb;">George R. R. Martin</div>
<div style="position:absolute;left:655.26px;top:1423.06px;font-size:21.9px;line-height:21.9px;color:#d5dbdb;font-weight:normal;font-style:normal;white-space:nowrap;-webkit-text-stroke:0.45px #d5dbdb;">4.4</div>
<div style="position:absolute;left:925.19px;top:1423.06px;font-size:21.9px;line-height:21.9px;color:#d5dbdb;font-weight:normal;font-style:normal;white-space:nowrap;letter-spacing:1.100px;-webkit-text-stroke:0.45px #d5dbdb;">12643</div>
<div style="position:absolute;left:1195.12px;top:1423.06px;font-size:21.9px;line-height:21.9px;color:#d5dbdb;font-weight:normal;font-style:normal;white-space:nowrap;letter-spacing:1.100px;-webkit-text-stroke:0.45px #d5dbdb;">11</div>
<div style="position:absolute;left:1465.05px;top:1423.06px;font-size:21.9px;line-height:21.9px;color:#d5dbdb;font-weight:normal;font-style:normal;white-space:nowrap;letter-spacing:1.100px;-webkit-text-stroke:0.45px #d5dbdb;">2011</div>
<div style="position:absolute;left:1734.98px;top:1423.06px;font-size:21.9px;line-height:21.9px;color:#d5dbdb;font-weight:normal;font-style:normal;white-space:nowrap;letter-spacing:0.500px;-webkit-text-stroke:0.45px #d5dbdb;">Fiction</div>
<div style="position:absolute;left:115.40px;top:1466.06px;font-size:21.9px;line-height:21.9px;color:#d5dbdb;font-weight:normal;font-style:normal;white-space:nowrap;letter-spacing:0.145px;-webkit-text-stroke:0.45px #d5dbdb;">A Game of Thrones / A …</div>
<div style="position:absolute;left:385.33px;top:1466.06px;font-size:21.9px;line-height:21.9px;color:#d5dbdb;font-weight:normal;font-style:normal;white-space:nowrap;letter-spacing:-0.250px;-webkit-text-stroke:0.45px #d5dbdb;">George R. R. Martin</div>
<div style="position:absolute;left:655.26px;top:1466.06px;font-size:21.9px;line-height:21.9px;color:#d5dbdb;font-weight:normal;font-style:normal;white-space:nowrap;-webkit-text-stroke:0.45px #d5dbdb;">4.7</div>
<div style="position:absolute;left:925.19px;top:1466.06px;font-size:21.9px;line-height:21.9px;color:#d5dbdb;font-weight:normal;font-style:normal;white-space:nowrap;letter-spacing:1.100px;-webkit-text-stroke:0.45px #d5dbdb;">19735</div>
<div style="position:absolute;left:1195.12px;top:1466.06px;font-size:21.9px;line-height:21.9px;color:#d5dbdb;font-weight:normal;font-style:normal;white-space:nowrap;letter-spacing:1.100px;-webkit-text-stroke:0.45px #d5dbdb;">30</div>
<div style="position:absolute;left:1465.05px;top:1466.06px;font-size:21.9px;line-height:21.9px;color:#d5dbdb;font-weight:normal;font-style:normal;white-space:nowrap;letter-spacing:1.100px;-webkit-text-stroke:0.45px #d5dbdb;">2014</div>
<div style="position:absolute;left:1734.98px;top:1466.06px;font-size:21.9px;line-height:21.9px;color:#d5dbdb;font-weight:normal;font-style:normal;white-space:nowrap;letter-spacing:0.500px;-webkit-text-stroke:0.45px #d5dbdb;">Fiction</div>
<div style="position:absolute;left:115.40px;top:1509.06px;font-size:21.9px;line-height:21.9px;color:#d5dbdb;font-weight:normal;font-style:normal;white-space:nowrap;-webkit-text-stroke:0.45px #d5dbdb;">A Gentleman in Mosco…</div>
<div style="position:absolute;left:385.33px;top:1509.06px;font-size:21.9px;line-height:21.9px;color:#d5dbdb;font-weight:normal;font-style:normal;white-space:nowrap;letter-spacing:0.210px;-webkit-text-stroke:0.45px #d5dbdb;">Amor Towles</div>
<div style="position:absolute;left:655.26px;top:1509.06px;font-size:21.9px;line-height:21.9px;color:#d5dbdb;font-weight:normal;font-style:normal;white-space:nowrap;-webkit-text-stroke:0.45px #d5dbdb;">4.7</div>
<div style="position:absolute;left:925.19px;top:1509.06px;font-size:21.9px;line-height:21.9px;color:#d5dbdb;font-weight:normal;font-style:normal;white-space:nowrap;letter-spacing:1.100px;-webkit-text-stroke:0.45px #d5dbdb;">19699</div>
<div style="position:absolute;left:1195.12px;top:1509.06px;font-size:21.9px;line-height:21.9px;color:#d5dbdb;font-weight:normal;font-style:normal;white-space:nowrap;letter-spacing:1.100px;-webkit-text-stroke:0.45px #d5dbdb;">15</div>
<div style="position:absolute;left:1465.05px;top:1509.06px;font-size:21.9px;line-height:21.9px;color:#d5dbdb;font-weight:normal;font-style:normal;white-space:nowrap;letter-spacing:1.100px;-webkit-text-stroke:0.45px #d5dbdb;">2017</div>
<div style="position:absolute;left:1734.98px;top:1509.06px;font-size:21.9px;line-height:21.9px;color:#d5dbdb;font-weight:normal;font-style:normal;white-space:nowrap;letter-spacing:0.500px;-webkit-text-stroke:0.45px #d5dbdb;">Fiction</div>
<div style="position:absolute;left:115.40px;top:1552.06px;font-size:21.9px;line-height:21.9px;color:#d5dbdb;font-weight:normal;font-style:normal;white-space:nowrap;letter-spacing:0.237px;-webkit-text-stroke:0.45px #d5dbdb;">A Higher Loyalty: Truth,…</div>
<div style="position:absolute;left:385.33px;top:1552.06px;font-size:21.9px;line-height:21.9px;color:#d5dbdb;font-weight:normal;font-style:normal;white-space:nowrap;letter-spacing:-0.470px;-webkit-text-stroke:0.45px #d5dbdb;">James Comey</div>
<div style="position:absolute;left:655.26px;top:1552.06px;font-size:21.9px;line-height:21.9px;color:#d5dbdb;font-weight:normal;font-style:normal;white-space:nowrap;-webkit-text-stroke:0.45px #d5dbdb;">4.7</div>
<div style="position:absolute;left:925.19px;top:1552.06px;font-size:21.9px;line-height:21.9px;color:#d5dbdb;font-weight:normal;font-style:normal;white-space:nowrap;letter-spacing:1.100px;-webkit-text-stroke:0.45px #d5dbdb;">5983</div>
<div style="position:absolute;left:1195.12px;top:1552.06px;font-size:21.9px;line-height:21.9px;color:#d5dbdb;font-weight:normal;font-style:normal;white-space:nowrap;-webkit-text-stroke:0.45px #d5dbdb;">3</div>
<div style="position:absolute;left:1465.05px;top:1552.06px;font-size:21.9px;line-height:21.9px;color:#d5dbdb;font-weight:normal;font-style:normal;white-space:nowrap;letter-spacing:1.100px;-webkit-text-stroke:0.45px #d5dbdb;">2018</div>
<div style="position:absolute;left:1734.98px;top:1552.06px;font-size:21.9px;line-height:21.9px;color:#d5dbdb;font-weight:normal;font-style:normal;white-space:nowrap;letter-spacing:0.260px;-webkit-text-stroke:0.45px #d5dbdb;">Non Fiction</div>
<div style="position:absolute;left:115.40px;top:1595.06px;font-size:21.9px;line-height:21.9px;color:#d5dbdb;font-weight:normal;font-style:normal;white-space:nowrap;letter-spacing:-0.105px;-webkit-text-stroke:0.45px #d5dbdb;">A Man Called Ove: A No…</div>
<div style="position:absolute;left:385.33px;top:1595.06px;font-size:21.9px;line-height:21.9px;color:#d5dbdb;font-weight:normal;font-style:normal;white-space:nowrap;letter-spacing:-0.129px;-webkit-text-stroke:0.45px #d5dbdb;">Fredrik Backman</div>
<div style="position:absolute;left:655.26px;top:1595.06px;font-size:21.9px;line-height:21.9px;color:#d5dbdb;font-weight:normal;font-style:normal;white-space:nowrap;-webkit-text-stroke:0.45px #d5dbdb;">4.6</div>
<div style="position:absolute;left:925.19px;top:1595.06px;font-size:21.9px;line-height:21.9px;color:#d5dbdb;font-weight:normal;font-style:normal;white-space:nowrap;letter-spacing:1.100px;-webkit-text-stroke:0.45px #d5dbdb;">23848</div>
<div style="position:absolute;left:1195.12px;top:1595.06px;font-size:21.9px;line-height:21.9px;color:#d5dbdb;font-weight:normal;font-style:normal;white-space:nowrap;-webkit-text-stroke:0.45px #d5dbdb;">8</div>
<div style="position:absolute;left:1465.05px;top:1595.06px;font-size:21.9px;line-height:21.9px;color:#d5dbdb;font-weight:normal;font-style:normal;white-space:nowrap;letter-spacing:1.100px;-webkit-text-stroke:0.45px #d5dbdb;">2016</div>
<div style="position:absolute;left:1734.98px;top:1595.06px;font-size:21.9px;line-height:21.9px;color:#d5dbdb;font-weight:normal;font-style:normal;white-space:nowrap;letter-spacing:0.500px;-webkit-text-stroke:0.45px #d5dbdb;">Fiction</div>
<div style="position:absolute;left:115.40px;top:1638.06px;font-size:21.9px;line-height:21.9px;color:#d5dbdb;font-weight:normal;font-style:normal;white-space:nowrap;letter-spacing:-0.105px;-webkit-text-stroke:0.45px #d5dbdb;">A Man Called Ove: A No…</div>
<div style="position:absolute;left:385.33px;top:1638.06px;font-size:21.9px;line-height:21.9px;color:#d5dbdb;font-weight:normal;font-style:normal;white-space:nowrap;letter-spacing:-0.129px;-webkit-text-stroke:0.45px #d5dbdb;">Fredrik Backman</div>
<div style="position:absolute;left:655.26px;top:1638.06px;font-size:21.9px;line-height:21.9px;color:#d5dbdb;font-weight:normal;font-style:normal;white-space:nowrap;-webkit-text-stroke:0.45px #d5dbdb;">4.6</div>
<div style="position:absolute;left:925.19px;top:1638.06px;font-size:21.9px;line-height:21.9px;color:#d5dbdb;font-weight:normal;font-style:normal;white-space:nowrap;letter-spacing:1.100px;-webkit-text-stroke:0.45px #d5dbdb;">23848</div>
<div style="position:absolute;left:1195.12px;top:1638.06px;font-size:21.9px;line-height:21.9px;color:#d5dbdb;font-weight:normal;font-style:normal;white-space:nowrap;-webkit-text-stroke:0.45px #d5dbdb;">8</div>
<div style="position:absolute;left:1465.05px;top:1638.06px;font-size:21.9px;line-height:21.9px;color:#d5dbdb;font-weight:normal;font-style:normal;white-space:nowrap;letter-spacing:1.100px;-webkit-text-stroke:0.45px #d5dbdb;">2017</div>
<div style="position:absolute;left:1734.98px;top:1638.06px;font-size:21.9px;line-height:21.9px;color:#d5dbdb;font-weight:normal;font-style:normal;white-space:nowrap;letter-spacing:0.500px;-webkit-text-stroke:0.45px #d5dbdb;">Fiction</div>
<div style="position:absolute;left:115.40px;top:1681.06px;font-size:21.9px;line-height:21.9px;color:#d5dbdb;font-weight:normal;font-style:normal;white-space:nowrap;letter-spacing:0.416px;-webkit-text-stroke:0.45px #d5dbdb;">A Patriot's History of th…</div>
<div style="position:absolute;left:385.33px;top:1681.06px;font-size:21.9px;line-height:21.9px;color:#d5dbdb;font-weight:normal;font-style:normal;white-space:nowrap;-webkit-text-stroke:0.45px #d5dbdb;">Larry Schweikart</div>
<div style="position:absolute;left:655.26px;top:1681.06px;font-size:21.9px;line-height:21.9px;color:#d5dbdb;font-weight:normal;font-style:normal;white-space:nowrap;-webkit-text-stroke:0.45px #d5dbdb;">4.6</div>
<div style="position:absolute;left:925.19px;top:1681.06px;font-size:21.9px;line-height:21.9px;color:#d5dbdb;font-weight:normal;font-style:normal;white-space:nowrap;letter-spacing:1.100px;-webkit-text-stroke:0.45px #d5dbdb;">460</div>
<div style="position:absolute;left:1195.12px;top:1681.06px;font-size:21.9px;line-height:21.9px;color:#d5dbdb;font-weight:normal;font-style:normal;white-space:nowrap;-webkit-text-stroke:0.45px #d5dbdb;">2</div>
<div style="position:absolute;left:1465.05px;top:1681.06px;font-size:21.9px;line-height:21.9px;color:#d5dbdb;font-weight:normal;font-style:normal;white-space:nowrap;letter-spacing:1.100px;-webkit-text-stroke:0.45px #d5dbdb;">2010</div>
<div style="position:absolute;left:1734.98px;top:1681.06px;font-size:21.9px;line-height:21.9px;color:#d5dbdb;font-weight:normal;font-style:normal;white-space:nowrap;letter-spacing:0.260px;-webkit-text-stroke:0.45px #d5dbdb;">Non Fiction</div>
<div style="position:absolute;left:115.40px;top:1724.06px;font-size:21.9px;line-height:21.9px;color:#d5dbdb;font-weight:normal;font-style:normal;white-space:nowrap;letter-spacing:0.214px;-webkit-text-stroke:0.45px #d5dbdb;">A Stolen Life: A Memoir</div>
<div style="position:absolute;left:385.33px;top:1724.06px;font-size:21.9px;line-height:21.9px;color:#d5dbdb;font-weight:normal;font-style:normal;white-space:nowrap;letter-spacing:-0.492px;-webkit-text-stroke:0.45px #d5dbdb;">Jaycee Dugard</div>
<div style="position:absolute;left:655.26px;top:1724.06px;font-size:21.9px;line-height:21.9px;color:#d5dbdb;font-weight:normal;font-style:normal;white-space:nowrap;-webkit-text-stroke:0.45px #d5dbdb;">4.6</div>
<div style="position:absolute;left:925.19px;top:1724.06px;font-size:21.9px;line-height:21.9px;color:#d5dbdb;font-weight:normal;font-style:normal;white-space:nowrap;letter-spacing:1.100px;-webkit-text-stroke:0.45px #d5dbdb;">4149</div>
<div style="position:absolute;left:1195.12px;top:1724.06px;font-size:21.9px;line-height:21.9px;color:#d5dbdb;font-weight:normal;font-style:normal;white-space:nowrap;letter-spacing:1.100px;-webkit-text-stroke:0.45px #d5dbdb;">32</div>
<div style="position:absolute;left:1465.05px;top:1724.06px;font-size:21.9px;line-height:21.9px;color:#d5dbdb;font-weight:normal;font-style:normal;white-space:nowrap;letter-spacing:1.100px;-webkit-text-stroke:0.45px #d5dbdb;">2011</div>
<div style="position:absolute;left:1734.98px;top:1724.06px;font-size:21.9px;line-height:21.9px;color:#d5dbdb;font-weight:normal;font-style:normal;white-space:nowrap;letter-spacing:0.260px;-webkit-text-stroke:0.45px #d5dbdb;">Non Fiction</div>
</div>
<div style="position:absolute;left:2288px;top:1198.3px;width:10px;height:55.5px;background:#767f8e;border-radius:4px;"></div>
<div style="position:absolute;left:2342px;top:345px;width:2px;height:1403px;background:#616161;"></div>
<div style="position:absolute;left:2343px;top:1641px;width:913px;height:2px;background:#616161;"></div>
<div style="position:absolute;left:2416.20px;top:412.62px;font-size:21.6px;line-height:21.6px;color:#ffffff;font-weight:normal;font-style:normal;white-space:nowrap;-webkit-text-stroke:0.15px #ffffff;">Configure</div>
<div style="position:absolute;left:2581.20px;top:412.70px;font-size:21.5px;line-height:21.5px;color:#9ba3ab;font-weight:normal;font-style:normal;white-space:nowrap;-webkit-text-stroke:0.15px #9ba3ab;">Code</div>
<div style="position:absolute;left:2380px;top:449.2px;width:840px;height:1.6000000000000227px;background:#616161;"></div>
<div style="position:absolute;left:2379.8px;top:447.5px;width:166.19999999999982px;height:3.1999999999999886px;background:#3fa7dc;"></div>
<div style="position:absolute;left:2379.80px;top:491.25px;font-size:21.8px;line-height:21.8px;color:#dfe3e3;font-weight:normal;font-style:normal;white-space:nowrap;-webkit-text-stroke:0.45px #dfe3e3;">Analysis type</div>
<div style="position:absolute;left:2380px;top:526px;width:788px;height:47.39999999999998px;background:#212733;border:2px solid #616161;border-radius:3px;"></div>
<div style="position:absolute;left:2400.30px;top:539.88px;font-size:22px;line-height:22px;color:#e8eaea;font-weight:normal;font-style:normal;white-space:nowrap;letter-spacing:0.4px;-webkit-text-stroke:0.45px #e8eaea;">Scatter Plot</div>
<svg style="left:3134.5px;top:545.1px" width="16" height="12"><path d="M0 0 H16 L8 12 Z" fill="#eeeeee"/></svg>
<div style="position:absolute;left:2379.60px;top:619.92px;font-size:22.3px;line-height:22.3px;color:#dfe3e3;font-weight:normal;font-style:normal;white-space:nowrap;-webkit-text-stroke:0.45px #dfe3e3;">A limit of 100,000 rows is used for this analysis.</div>
<div style="position:absolute;left:2379.80px;top:671.65px;font-size:21.8px;line-height:21.8px;color:#dfe3e3;font-weight:normal;font-style:normal;white-space:nowrap;-webkit-text-stroke:0.45px #dfe3e3;">Analysis name</div>
<div style="position:absolute;left:2380px;top:710.2px;width:788px;height:45.299999999999955px;background:#212733;border:2px solid #616161;border-radius:3px;"></div>
<div style="position:absolute;left:2396.30px;top:724.52px;font-size:21.6px;line-height:21.6px;color:#ffffff;font-weight:normal;font-style:normal;white-space:nowrap;-webkit-text-stroke:0.15px #ffffff;">Ratings Scatter Plot</div>
<div style="position:absolute;left:2380.00px;top:765.16px;font-size:20.6px;line-height:20.6px;color:#d5dbdb;font-weight:normal;font-style:italic;white-space:nowrap;-webkit-text-stroke:0.25px #d5dbdb;">Optional</div>
<div style="position:absolute;left:2379.80px;top:823.95px;font-size:21.8px;line-height:21.8px;color:#dfe3e3;font-weight:normal;font-style:normal;white-space:nowrap;letter-spacing:-0.6px;-webkit-text-stroke:0.45px #dfe3e3;">X axis</div>
<div style="position:absolute;left:2380px;top:862.5px;width:788px;height:44.700000000000045px;background:#212733;border:2px solid #616161;border-radius:3px;"></div>
<div style="position:absolute;left:2400.30px;top:875.03px;font-size:22px;line-height:22px;color:#e8eaea;font-weight:normal;font-style:normal;white-space:nowrap;letter-spacing:-0.6px;-webkit-text-stroke:0.45px #e8eaea;">Reviews</div>
<svg style="left:3134.5px;top:880.2px" width="16" height="12"><path d="M0 0 H16 L8 12 Z" fill="#eeeeee"/></svg>
<div style="position:absolute;left:2379.80px;top:940.15px;font-size:21.8px;line-height:21.8px;color:#dfe3e3;font-weight:normal;font-style:normal;white-space:nowrap;letter-spacing:-0.6px;-webkit-text-stroke:0.45px #dfe3e3;">Y axis</div>
<div style="position:absolute;left:2380px;top:978.7px;width:788px;height:46.299999999999955px;background:#212733;border:2px solid #616161;border-radius:3px;"></div>
<div style="position:absolute;left:2400.30px;top:992.03px;font-size:22px;line-height:22px;color:#e8eaea;font-weight:normal;font-style:normal;white-space:nowrap;letter-spacing:-0.25px;-webkit-text-stroke:0.45px #e8eaea;">User Rating</div>
<svg style="left:3134.5px;top:997.2px" width="16" height="12"><path d="M0 0 H16 L8 12 Z" fill="#eeeeee"/></svg>
<div style="position:absolute;left:2379.80px;top:1055.85px;font-size:21.8px;line-height:21.8px;color:#dfe3e3;font-weight:normal;font-style:normal;white-space:nowrap;-webkit-text-stroke:0.45px #dfe3e3;">Color by</div>
<div style="position:absolute;left:2380px;top:1095.1px;width:788px;height:46.0px;background:#212733;border:2px solid #616161;border-radius:3px;"></div>
<div style="position:absolute;left:2400.30px;top:1108.28px;font-size:22px;line-height:22px;color:#e8eaea;font-weight:normal;font-style:normal;white-space:nowrap;letter-spacing:-0.75px;-webkit-text-stroke:0.45px #e8eaea;">Genre</div>
<svg style="left:3134.5px;top:1113.5px" width="16" height="12"><path d="M0 0 H16 L8 12 Z" fill="#eeeeee"/></svg>
<div style="position:absolute;left:2380.00px;top:1148.76px;font-size:20.6px;line-height:20.6px;color:#d5dbdb;font-weight:normal;font-style:italic;white-space:nowrap;-webkit-text-stroke:0.25px #d5dbdb;">Optional</div>
<div style="position:absolute;left:2379.80px;top:1208.45px;font-size:21.8px;line-height:21.8px;color:#dfe3e3;font-weight:normal;font-style:normal;white-space:nowrap;letter-spacing:-0.35px;-webkit-text-stroke:0.45px #dfe3e3;">Facet by</div>
<div style="position:absolute;left:2380px;top:1246.7px;width:788px;height:46.0px;background:#212733;border:2px solid #616161;border-radius:3px;"></div>
<div style="position:absolute;left:2400.30px;top:1259.88px;font-size:22px;line-height:22px;color:#a9b0b3;font-weight:normal;font-style:italic;white-space:nowrap;letter-spacing:-0.8px;-webkit-text-stroke:0.45px #a9b0b3;">Select...</div>
<svg style="left:3134.5px;top:1265.1px" width="16" height="12"><path d="M0 0 H16 L8 12 Z" fill="#eeeeee"/></svg>
<div style="position:absolute;left:2380.00px;top:1301.96px;font-size:20.6px;line-height:20.6px;color:#d5dbdb;font-weight:normal;font-style:italic;white-space:nowrap;-webkit-text-stroke:0.25px #d5dbdb;">Optional</div>
<div style="position:absolute;left:2386.40px;top:1688.95px;font-size:19.2px;line-height:19.2px;color:#ffffff;font-weight:normal;font-style:normal;white-space:nowrap;-webkit-text-stroke:0.4px #fff;">Clear</div>
<div style="position:absolute;left:3034.5px;top:1672.3px;width:103.09999999999991px;height:47.299999999999955px;background:transparent;border:2px solid #616161;border-radius:3px;"></div>
<div style="position:absolute;left:3050.30px;top:1688.61px;font-size:19.6px;line-height:19.6px;color:#eceeee;font-weight:normal;font-style:normal;white-space:nowrap;-webkit-text-stroke:0.4px #eceeee;">Preview</div>
<div style="position:absolute;left:3152px;top:1672.3px;width:76px;height:47.299999999999955px;background:#e27a34;border-radius:3px;"></div>
<div style="position:absolute;left:3168.00px;top:1689.46px;font-size:18.6px;line-height:18.6px;color:#16191f;font-weight:normal;font-style:normal;white-space:nowrap;-webkit-text-stroke:0.5px #16191f;">Save</div>
<div style="position:absolute;left:32.50px;top:1806.85px;font-size:20.5px;line-height:20.5px;color:#dcdcdc;font-weight:normal;font-style:normal;white-space:nowrap;-webkit-text-stroke:0.45px #dcdcdc;">0</div>
<div style="position:absolute;left:68px;top:1804.4px;width:27.599999999999994px;height:25.799999999999955px;background:#ececec;"></div>
<div style="position:absolute;left:71.00px;top:1810.11px;font-size:17px;line-height:17px;color:#1a2030;font-weight:normal;font-style:normal;white-space:nowrap;-webkit-text-stroke:0.45px #1a2030;">$_</div>
<div style="position:absolute;left:111.30px;top:1806.85px;font-size:20.5px;line-height:20.5px;color:#dcdcdc;font-weight:normal;font-style:normal;white-space:nowrap;-webkit-text-stroke:0.45px #dcdcdc;">1</div>
<svg style="left:143px;top:1803px" width="26" height="26" viewBox="0 0 26 26">
<rect x="5" y="5" width="16" height="16" fill="none" stroke="#e0e0e0" stroke-width="2.6"/>
<rect x="9.5" y="9.5" width="7" height="7" fill="#e0e0e0"/>
<path d="M9 1 V5 M13 1 V5 M17 1 V5 M9 21 V25 M13 21 V25 M17 21 V25 M1 9 H5 M1 13 H5 M1 17 H5 M21 9 H25 M21 13 H25 M21 17 H25" stroke="#e0e0e0" stroke-width="2.2"/>
</svg>
<div style="position:absolute;left:203.00px;top:1805.64px;font-size:22.4px;line-height:22.4px;color:#dcdcdc;font-weight:normal;font-style:normal;white-space:nowrap;-webkit-text-stroke:0.45px #dcdcdc;">Git: idle</div>
<div style="position:absolute;left:3204.40px;top:1805.83px;font-size:23px;line-height:23px;color:#dcdcdc;font-weight:normal;font-style:normal;white-space:nowrap;letter-spacing:0.35px;-webkit-text-stroke:0.45px #dcdcdc;">untitled.flow</div>
</body></html>
